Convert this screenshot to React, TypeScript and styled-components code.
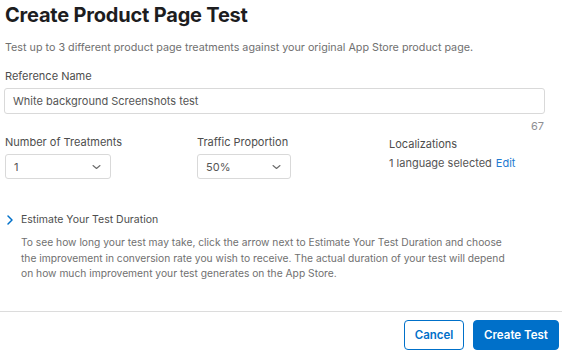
import * as React from 'react';
import styled, { createGlobalStyle } from 'styled-components';

const GlobalStyle = createGlobalStyle`
    html, body {
        margin: 0;
        padding: 0;
        background: #ffffff;
    }
    body {
        font-family: Inter, "Noto Sans", sans-serif;
        color: #1d1d1f;
    }
`

const Page = styled.div`
    width: 562px;
    height: 352px;
    display: flex;
    flex-direction: column;
    overflow: hidden;
`

const Body = styled.div`
    padding: 0 17px 0 5px;
    flex: 1;
`

const Title = styled.h1`
    margin: 3px 0 0;
    font-size: 20px;
    font-weight: 700;
    line-height: 25px;
    letter-spacing: -0.2px;
    color: #1d1d1f;
`

const Intro = styled.p`
    margin: 13px 0 0;
    font-size: 10.75px;
    line-height: 14px;
    color: #707070;
`

const Label = styled.div<{ $offset?: number }>`
    margin-top: ${p => p.$offset || 0}px;
    font-size: 11px;
    line-height: 14px;
    color: #4d4d4d;
`

const Field = styled.div`
    margin-top: 14px;
`

const TextInput = styled.div`
    margin: 5px 0 0 -1px;
    width: 541px;
    height: 26px;
    border: 1px solid #d9d9d9;
    border-radius: 3px;
    padding: 0 8px;
    box-sizing: border-box;
    display: flex;
    align-items: center;
    font-size: 11px;
    color: #555555;
`

const Counter = styled.div`
    text-align: right;
    margin-top: 6px;
    padding-right: 1px;
    font-size: 11px;
    line-height: 13px;
    color: #8e8e93;
`

const Row = styled.div`
    display: flex;
    margin-top: 2px;
`

const Column = styled.div<{ $width: number }>`
    width: ${p => p.$width}px;
    display: flex;
    flex-direction: column;
`

const Select = styled.div<{ $width: number }>`
    margin-top: 5px;
    width: ${p => p.$width}px;
    height: 25px;
    border: 1px solid #d9d9d9;
    border-radius: 3px;
    display: flex;
    align-items: center;
    justify-content: space-between;
    padding: 0 9px 0 8px;
    box-sizing: border-box;
    font-size: 11px;
    color: #555555;
`

const Selected = styled.div`
    margin-top: 5px;
    font-size: 11px;
    line-height: 14px;
    color: #555555;
`

const EditLink = styled.span`
    color: #1f7ad1;
    margin-left: 4px;
`

const Disclosure = styled.div`
    margin-top: 34px;
    display: flex;
    align-items: center;
    gap: 6px;
    font-size: 10.5px;
    line-height: 14px;
    color: #4d4d4d;
`

const Paragraph = styled.p`
    margin: 8px 0 0 16px;
    font-size: 10.25px;
    line-height: 15.5px;
    white-space: nowrap;
    color: #707070;
`

const Footer = styled.div`
    border-top: 1px solid #dcdcdc;
    height: 41px;
    display: flex;
    justify-content: flex-end;
    align-items: flex-start;
    padding: 8px 3px 0 0;
    box-sizing: border-box;
    gap: 9px;
`

const Button = styled.button<{ $primary?: boolean; $width: number }>`
    width: ${p => p.$width}px;
    height: 30px;
    padding: 0;
    border-radius: 4px;
    border: 1px solid #0070c9;
    background: ${p => (p.$primary ? '#0070c9' : '#ffffff')};
    color: ${p => (p.$primary ? '#ffffff' : '#0070c9')};
    font-family: Inter, "Noto Sans", sans-serif;
    font-size: 11.5px;
    font-weight: 600;
`

function DownChevron() {
    return (
        <svg width="9" height="6" viewBox="0 0 9 6" fill="none">
            <path d="M1 1.5 L4.5 4.5 L8 1.5" stroke="#6b6b6b" strokeWidth="1.1" strokeLinecap="round" strokeLinejoin="round" />
        </svg>
    )
}

function RightChevron() {
    return (
        <svg width="10" height="12" viewBox="0 0 10 12" fill="none">
            <path d="M3 2 L7 6 L3 10" stroke="#0070c9" strokeWidth="1.5" strokeLinecap="round" strokeLinejoin="round" />
        </svg>
    )
}

export default function App() {
    return (
        <Page>
            <GlobalStyle />
            <Body>
                <Title>Create Product Page Test</Title>
                <Intro>
                    Test up to 3 different product page treatments against your original App Store product page.
                </Intro>
                <Field>
                    <Label>Reference Name</Label>
                    <TextInput>White background Screenshots test</TextInput>
                    <Counter>67</Counter>
                </Field>
                <Row>
                    <Column $width={192}>
                        <Label>Number of Treatments</Label>
                        <Select $width={106}>
                            1
                            <DownChevron />
                        </Select>
                    </Column>
                    <Column $width={192}>
                        <Label>Traffic Proportion</Label>
                        <Select $width={94}>
                            50%
                            <DownChevron />
                        </Select>
                    </Column>
                    <Column $width={150}>
                        <Label $offset={2}>Localizations</Label>
                        <Selected>
                            1 language selected<EditLink>Edit</EditLink>
                        </Selected>
                    </Column>
                </Row>
                <Disclosure>
                    <RightChevron />
                    Estimate Your Test Duration
                </Disclosure>
                <Paragraph>
                    To see how long your test may take, click the arrow next to Estimate Your Test Duration and choose
                    <br />
                    the improvement in conversion rate you wish to receive. The actual duration of your test will depend
                    <br />
                    on how much improvement your test generates on the App Store.
                </Paragraph>
            </Body>
            <Footer>
                <Button $width={60}>Cancel</Button>
                <Button $primary $width={86}>Create Test</Button>
            </Footer>
        </Page>
    )
}
